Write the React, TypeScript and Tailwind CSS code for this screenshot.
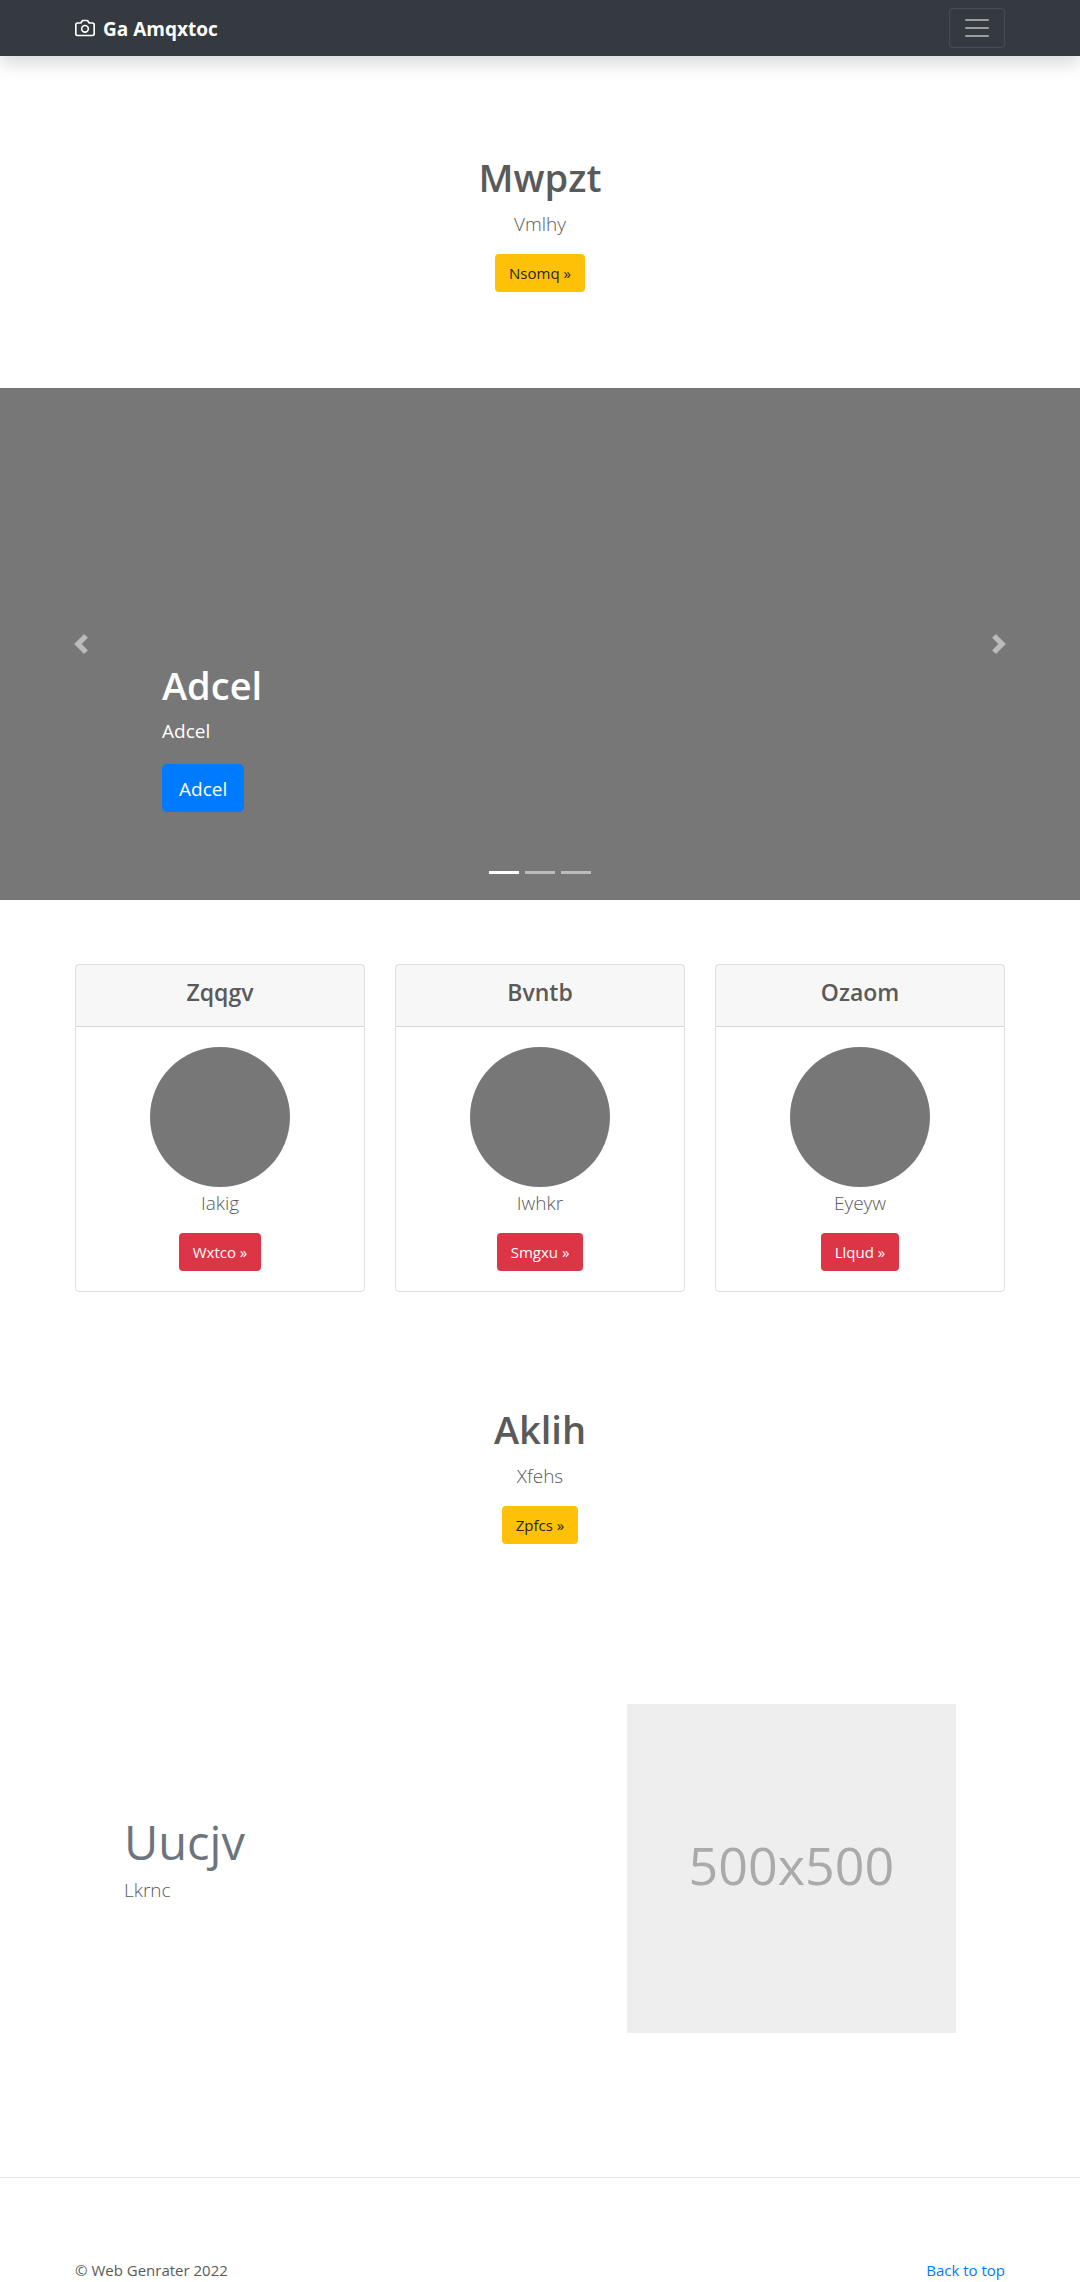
import React from "react";

const cards = [
  { title: "Zqqgv", text: "Iakig", action: "Wxtco »" },
  { title: "Bvntb", text: "Iwhkr", action: "Smgxu »" },
  { title: "Ozaom", text: "Eyeyw", action: "Llqud »" },
];

function Camera() {
  return (
    <svg
      xmlns="http://www.w3.org/2000/svg"
      width="20"
      height="20"
      viewBox="0 0 24 24"
      fill="none"
      stroke="currentColor"
      strokeWidth="2"
      strokeLinecap="round"
      strokeLinejoin="round"
      aria-hidden="true"
    >
      <path d="M23 19a2 2 0 0 1-2 2H3a2 2 0 0 1-2-2V8a2 2 0 0 1 2-2h4l2-3h6l2 3h4a2 2 0 0 1 2 2z" />
      <circle cx="12" cy="13" r="4" />
    </svg>
  );
}

function Navbar() {
  return (
    <header className="relative z-10 bg-[#343a40] shadow-[0_8px_16px_rgba(0,0,0,0.15)]">
      <div className="mx-auto flex h-14 max-w-[960px] items-center justify-between px-[15px]">
        <a href="#top" className="flex items-center gap-2 text-[19px] leading-8 font-bold text-white">
          <Camera />
          <span className="pt-0.5">Ga Amqxtoc</span>
        </a>
        <button
          type="button"
          aria-label="Toggle navigation"
          className="flex h-10 w-14 items-center justify-center rounded border border-white/10 text-white/50"
        >
          <svg width="30" height="30" viewBox="0 0 30 30" stroke="currentColor" strokeWidth="2" strokeLinecap="round" aria-hidden="true">
            <path d="M4 7h22M4 15h22M4 23h22" />
          </svg>
        </button>
      </div>
    </header>
  );
}

function Hero({ title, text, action }: { title: string; text: string; action: string }) {
  return (
    <section className="flex flex-col items-center px-4 pt-[97px] pb-24 text-center">
      <h1 className="mb-2 text-[38px] leading-[48px] font-semibold">{title}</h1>
      <p className="mb-[15px] text-[19px] leading-[30px] font-light">{text}</p>
      <a href="#more" className="rounded bg-[#ffc107] px-3.5 py-[7px] text-[15px] leading-6 text-[#212529]">
        {action}
      </a>
    </section>
  );
}

function Carousel() {
  return (
    <section className="relative flex h-[512px] flex-col justify-end bg-[#777] px-[15%] pb-[88px] text-white" aria-label="Slides">
      <h2 className="mb-2 text-[38px] leading-[48px] font-semibold">Adcel</h2>
      <p className="mb-[19px] text-[19px] leading-7">Adcel</p>
      <a href="#slide" className="self-start rounded-[5px] bg-[#007bff] px-[17px] pt-2.5 pb-2 text-[19px] leading-[30px]">
        Adcel
      </a>
      <button type="button" aria-label="Previous" className="absolute inset-y-0 left-0 flex w-[15%] items-center justify-center text-white/50">
        <svg width="20" height="20" viewBox="0 0 8 8" fill="currentColor" aria-hidden="true">
          <path d="M5.25 0l-4 4 4 4 1.5-1.5L4.25 4l2.5-2.5L5.25 0z" />
        </svg>
      </button>
      <button type="button" aria-label="Next" className="absolute inset-y-0 right-0 flex w-[15%] items-center justify-center text-white/50">
        <svg width="20" height="20" viewBox="0 0 8 8" fill="currentColor" aria-hidden="true">
          <path d="M2.75 0l-1.5 1.5L3.75 4l-2.5 2.5L2.75 8l4-4-4-4z" />
        </svg>
      </button>
      <div className="absolute inset-x-0 bottom-[26px] flex justify-center gap-[6px]">
        <button type="button" aria-label="Slide 1" className="h-[3px] w-[30px] bg-white" />
        <button type="button" aria-label="Slide 2" className="h-[3px] w-[30px] bg-white/50" />
        <button type="button" aria-label="Slide 3" className="h-[3px] w-[30px] bg-white/50" />
      </div>
    </section>
  );
}

function Cards() {
  return (
    <section className="mx-auto mt-16 mb-4 grid max-w-[960px] grid-cols-3 gap-[30px] px-[15px]">
      {cards.map((card) => (
        <article key={card.title} className="rounded border border-black/[.125] text-center">
          <h2 className="border-b border-black/[.125] bg-black/[.03] px-5 pt-[13px] pb-[19px] text-[23px] leading-[29px] font-semibold">
            {card.title}
          </h2>
          <div className="flex flex-col items-center p-5">
            <div className="size-[140px] rounded-full bg-[#777]" />
            <p className="mt-px mb-[15px] text-[19px] leading-[30px] font-light">{card.text}</p>
            <a href="#card" className="rounded bg-[#dc3545] px-3.5 py-[7px] text-[15px] leading-6 text-white">
              {card.action}
            </a>
          </div>
        </article>
      ))}
    </section>
  );
}

function Feature() {
  return (
    <section className="mx-auto max-w-[960px] px-16 pt-16 pb-36">
      <div className="grid grid-cols-12 items-center gap-[30px]">
        <div className="col-span-7 pb-4">
          <h2 className="mb-2 text-[47px] leading-[50px] text-[#6c757d]">Uucjv</h2>
          <p className="text-[19px] leading-[30px] font-light">Lkrnc</p>
        </div>
        <div
          role="img"
          aria-label="Placeholder"
          className="col-span-5 flex aspect-square items-center justify-center bg-[#eee] pb-2 text-[52px] leading-none text-[#aaa]"
        >
          500x500
        </div>
      </div>
    </section>
  );
}

export default function App() {
  return (
    <div id="top" className="bg-white font-['Open_Sans','Noto_Sans',sans-serif] text-[15px] leading-6 text-[#5a5a5a]">
      <Navbar />
      <main>
        <Hero title="Mwpzt" text="Vmlhy" action="Nsomq »" />
        <Carousel />
        <Cards />
        <Hero title="Aklih" text="Xfehs" action="Zpfcs »" />
        <Feature />
      </main>
      <footer className="border-t border-black/10">
        <div className="mx-auto flex max-w-[960px] justify-between px-[15px] pt-20">
          <p>© Web Genrater 2022</p>
          <a href="#top" className="text-[#007bff]">Back to top</a>
        </div>
      </footer>
    </div>
  );
}
